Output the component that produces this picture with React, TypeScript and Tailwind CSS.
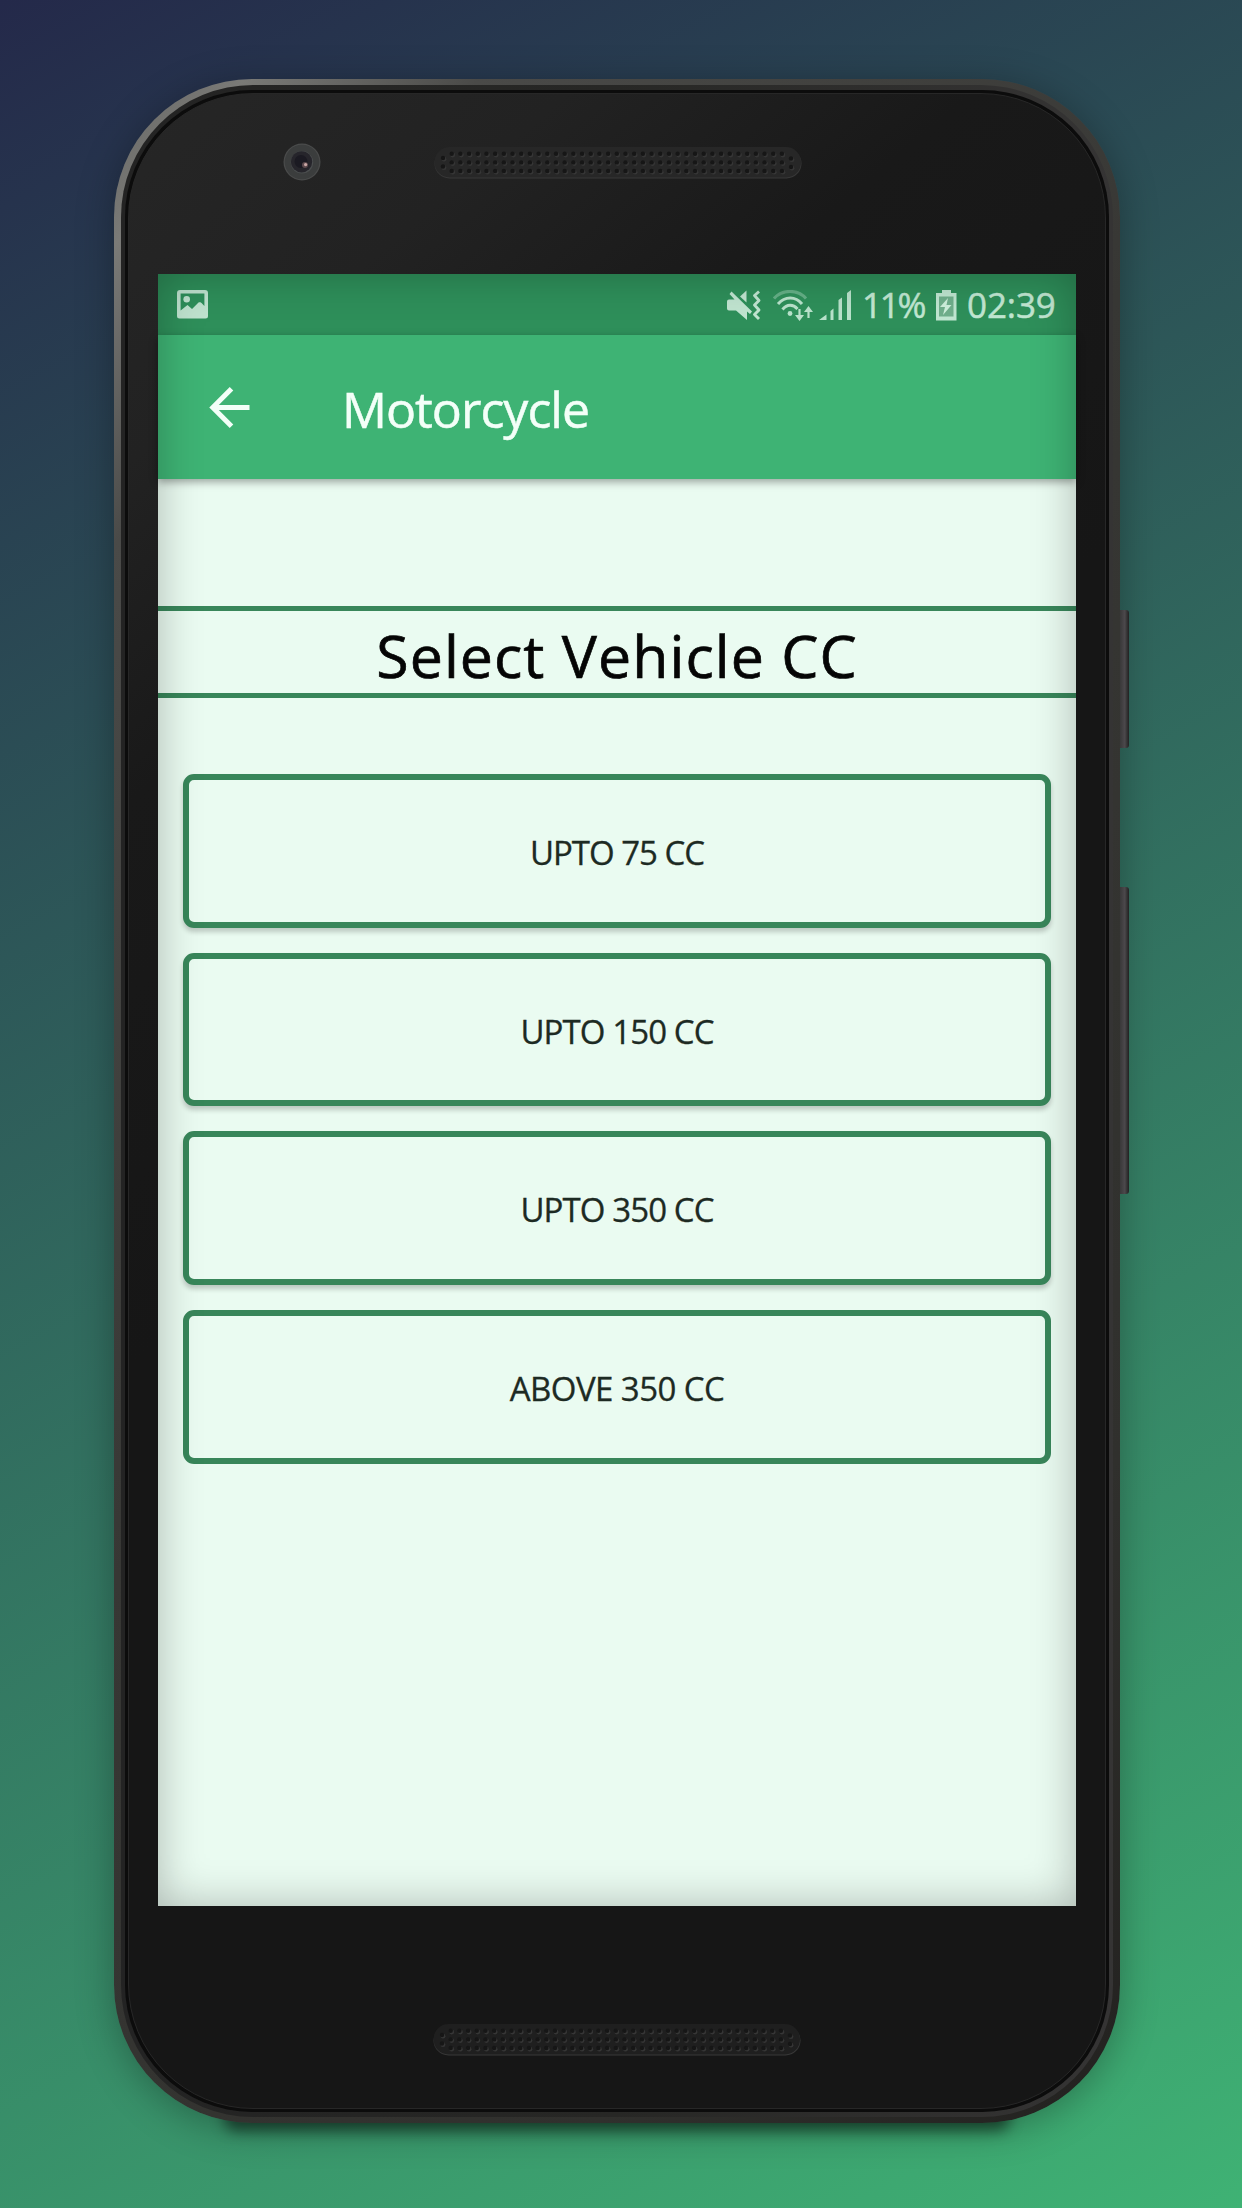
import React from "react";

const options = [
  { label: "UPTO 75 CC", style: "tracking-[-1px] shadow-[0_4px_5px_rgba(0,0,0,0.2)]" },
  { label: "UPTO 150 CC", style: "tracking-[-0.9px] shadow-[0_4px_5px_rgba(0,0,0,0.2)]" },
  { label: "UPTO 350 CC", style: "tracking-[-0.9px] shadow-[0_4px_5px_rgba(0,0,0,0.2)]" },
  { label: "ABOVE 350 CC", style: "tracking-[-0.55px]" },
];

function SpeakerGrille({ fill }: { fill: string }) {
  const holes: [number, number][] = [
    [9, 11],
    [9, 19.5],
    [357, 11.5],
    [357, 20],
  ];
  for (let c = 0; c < 39; c++) {
    for (let r = 0; r < 3; r++) holes.push([17.7 + c * 8.69, 6.8 + r * 8.6]);
  }
  return (
    <svg width="368" height="32" viewBox="0 0 368 32" className="block">
      <rect x="0.5" y="1.5" width="367" height="30" rx="15" fill="#383838" />
      <rect x="0.5" y="0" width="366.5" height="30.5" rx="15" fill={fill} />
      {holes.map(([x, y], i) => (
        <g key={i}>
          <circle cx={x + 1} cy={y + 1.2} r="2.4" fill="#363636" />
          <circle cx={x} cy={y} r="2.2" fill="#161616" />
        </g>
      ))}
    </svg>
  );
}

function Camera() {
  return (
    <svg width="38" height="38" viewBox="0 0 38 38" className="block">
      <circle cx="19" cy="19" r="18.5" fill="#4a4b4b" />
      <circle cx="19" cy="19" r="17.3" fill="#3b3d3d" />
      <circle cx="19" cy="19.3" r="11.2" fill="#4b4e4f" />
      <circle cx="18.6" cy="18.8" r="10.6" fill="#26252b" />
      <circle cx="18" cy="18.5" r="6.5" fill="#1b1a22" />
      <circle cx="22" cy="22" r="3" fill="#5d4a4e" />
      <circle cx="22.6" cy="21.6" r="1.6" fill="#c9a7a5" />
    </svg>
  );
}

function PictureIcon() {
  return (
    <svg width="31" height="29" viewBox="0 0 31 29" className="block">
      <path
        fillRule="evenodd"
        fill="#bfe3cf"
        d="M3 0h25a3 3 0 0 1 3 3v23a2.500 2.500 0 0 1-2.500 2.500h-26A2.500 2.500 0 0 1 0 26V3a3 3 0 0 1 3-3ZM3.600 3.500V20.500L10.500 15l4.500 4 6.500-6.500c1.500-.8 3 0 3.500 1l2.400 2.500V3.500Z"
      />
      <circle cx="9.700" cy="9.300" r="3.300" fill="#bfe3cf" />
    </svg>
  );
}

function MuteVibrateIcon() {
  return (
    <svg width="34" height="31" viewBox="0 0 34 31" className="block" fill="#c0e4d0">
      <path d="M0 11.500a2 2 0 0 1 2-2h5.500L2.500 4 4.500 1.500 25 21.500 23 24l-3-2.500V30L9 20.500H2A2 2 0 0 1 0 18.500Z" />
      <path d="M19.500 0.500v12L13 6.500Z" />
      <path
        d="M32 1.500l-4.500 4 4.500 5-4.500 4.500 4.500 5-4.500 4.500 4.500 4.500"
        fill="none"
        stroke="#c0e4d0"
        strokeWidth="2.900"
        strokeLinejoin="round"
      />
    </svg>
  );
}

function WifiIcon() {
  return (
    <svg width="41" height="32" viewBox="0 0 41 32" className="block" fill="none" stroke="#b9e2cb" strokeWidth="3">
      <path d="M1 8.500C9 -1 25 -1 33 8.500" opacity="0.4" />
      <path d="M5 14C12 6 22.500 6 29 14" />
      <path d="M9.500 19.500C14 14 20 14 24.500 19" />
      <circle cx="17" cy="23.500" r="2.400" fill="#b9e2cb" stroke="none" />
      <path d="M26.500 19v9M35.500 28v-9" strokeWidth="2.200" />
      <path d="M22 25h9l-4.500 6ZM31 22h9l-4.500-6Z" fill="#b9e2cb" stroke="none" />
    </svg>
  );
}

function SignalIcon() {
  return (
    <svg width="33" height="30" viewBox="0 0 33 30" className="block" fill="#b9e2cb">
      <path d="M0 30l7.500-5.500V30ZM11.500 21l3-2.500V30h-3ZM19.500 10l3.500-2.500V30h-3.500ZM28 3l4-3v30h-4Z" />
    </svg>
  );
}

function BatteryIcon() {
  return (
    <svg width="22" height="31" viewBox="0 0 22 31" className="block">
      <path d="M6 0h9v3h5.500v27.500H0V3h6Z" fill="#bfe5d0" />
      <path d="M3 6.500h14.500v20H3Z" fill="#6fae8b" />
      <path d="M12 8l-8 9h5l-2 8 8.500-10h-5Z" fill="#cdeedb" />
    </svg>
  );
}

export default function App() {
  return (
    <div className="h-[2208px] w-[1242px] overflow-hidden bg-[linear-gradient(152deg,#24294a_0%,#3fb274_100%)] pt-[79px] pl-[114px] font-['Open_Sans',sans-serif]">
      <div className="relative h-[2044px] w-[1006px]">
        {/* Cast shadow */}
        <div className="absolute inset-x-[110px] bottom-[-8px] h-[26px] rounded-full bg-black/50 blur-[7px]" />
        <div className="absolute top-[531px] right-[-9px] h-[138px] w-[14px] rounded-r-[3px] bg-[linear-gradient(90deg,#464446,#464446_40%,#575357_70%,#3c3a3c_85%,#262626)]" />
        <div className="absolute top-[808px] right-[-9px] h-[307px] w-[14px] rounded-r-[3px] bg-[linear-gradient(90deg,#464446,#464446_40%,#575357_70%,#3c3a3c_85%,#262626)]" />

        {/* Metal frame */}
        <div className="relative h-[2044px] w-[1006px] rounded-[138px] bg-[linear-gradient(128deg,#666663_0%,#7a7a77_5%,#4a4a48_14%,#373734_45%,#30302d_80%,#22211f_100%)] py-[6px] px-[7px] shadow-[0_6px_38px_rgba(0,0,0,0.3)]">
          <div className="h-full w-full rounded-[132px] bg-[linear-gradient(90deg,#232323_0%,#272725_50%,#353434_100%)] px-[4px] py-[5px]">
            <div className="h-full w-full rounded-[127px] bg-[#0c0c0c] p-[3px]">
              {/* Front glass */}
              <div className="flex h-full w-full flex-col items-center rounded-[125px] border border-[#272727] bg-[linear-gradient(140deg,#262626_0%,#222_13%,#191919_25%,#161616_45%,#161616_100%)]">
                <div className="flex h-[180px] w-full shrink-0 pt-[49px] pl-[154px]">
                  <Camera />
                  <div className="ml-[113px] pt-[4px]">
                    <SpeakerGrille fill="#272727" />
                  </div>
                </div>

                <div className="relative flex h-[1632px] w-[918px] shrink-0 flex-col bg-[#eafbf1]">
                  {/* Status bar */}
                  <div className="flex h-[61px] shrink-0 items-start bg-[#2e8f5a] pt-[16px] pl-[19px]">
                    <PictureIcon />
                    <div className="ml-[519px]">
                      <MuteVibrateIcon />
                    </div>
                    <div className="ml-[12px]">
                      <WifiIcon />
                    </div>
                    <div className="ml-[5px]">
                      <SignalIcon />
                    </div>
                    <div className="ml-[10px] w-[74px] text-[35px] leading-[30px] tracking-[-2.2px] whitespace-nowrap text-[#c0e6d1] [-webkit-text-stroke:0.5px_#c0e6d1]">
                      11%
                    </div>
                    <BatteryIcon />
                    <div className="ml-[9px] text-[35px] leading-[30px] tracking-[-0.1px] whitespace-nowrap text-[#c0e6d1] [-webkit-text-stroke:0.5px_#c0e6d1]">
                      02:39
                    </div>
                  </div>

                  {/* App bar */}
                  <div className="relative flex h-[144px] shrink-0 items-center bg-[#3eb374] pl-[51px] shadow-[0_3px_8px_rgba(0,0,0,0.35)]">
                    <svg width="41" height="41" viewBox="0 0 41 41" className="block" fill="none" stroke="#f3fff8" strokeWidth="5">
                      <path d="M22.500 1.800L3.800 20.500L22.500 39.200M4 20.500H40.500" />
                    </svg>
                    <h1 className="ml-[92px] pt-[4px] text-[50px] leading-[60px] tracking-[-1px] text-[#f3fff8] [-webkit-text-stroke:0.5px_#f3fff8]">
                      Motorcycle
                    </h1>
                  </div>

                  <h2 className="mt-[127px] h-[92px] shrink-0 border-y-[5px] border-[#38865a] text-center text-[59px] leading-[88px] tracking-[1.05px] text-[#050505] [-webkit-text-stroke:0.7px_#050505]">
                    Select Vehicle CC
                  </h2>

                  <div className="mt-[76px] flex flex-col gap-[25.200px] px-[25px]">
                    {options.map((o) => (
                      <button
                        key={o.label}
                        className={`flex h-[153.500px] items-center justify-center rounded-[11px] border-[6.500px] border-[#38865a] bg-[#eafbf1] pt-[4px] text-[33px] text-[#1d2a23] [-webkit-text-stroke:0.3px_#1d2a23] ${o.style}`}
                      >
                        {o.label}
                      </button>
                    ))}
                  </div>

                  {/* Vignette over the glass */}
                  <div className="pointer-events-none absolute inset-0 shadow-[inset_0_0_44px_rgba(0,0,0,0.27)]" />
                </div>

                <div className="mt-[118px]">
                  <SpeakerGrille fill="#1f1f1f" />
                </div>
              </div>
            </div>
          </div>
        </div>
      </div>
    </div>
  );
}
